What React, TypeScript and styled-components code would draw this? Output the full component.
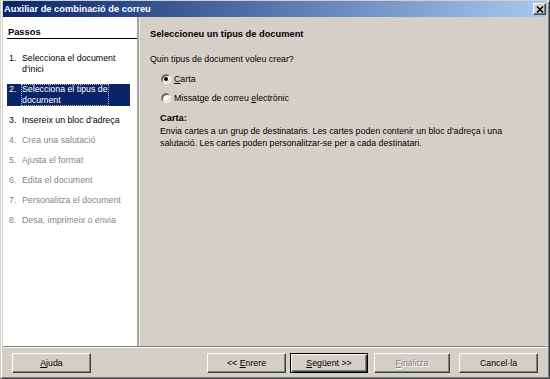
import React from "react";
import styled, { createGlobalStyle } from "styled-components";

const GlobalStyle = createGlobalStyle`
    html, body {
        margin: 0;
        padding: 0;
        background: #d4d0c8;
    }
    body {
        font-family: "Liberation Sans", Arial, sans-serif;
        font-size: 8.8px;
        color: #000;
    }
    * {
        box-sizing: border-box;
    }
`;

const Window = styled.div`
    width: 550px;
    height: 379px;
    display: flex;
    flex-direction: column;
    background: #d4d0c8;
    border: 1px solid;
    border-color: #d4d0c8 #404040 #404040 #d4d0c8;
    box-shadow: inset 1px 1px #fff, inset -1px -1px #808080;
    padding: 0 2px 2px 2px;
`;

const TitleBar = styled.div`
    flex: none;
    height: 16px;
    display: flex;
    align-items: center;
    justify-content: space-between;
    padding: 0 1px;
    background: linear-gradient(to right, #0a246a, #a6caf0);
`;

const Title = styled.span`
    color: #fff;
    font-weight: bold;
    font-size: 9.3px;
`;

const CloseButton = styled.button`
    width: 13px;
    height: 12px;
    padding: 0;
    display: flex;
    align-items: center;
    justify-content: center;
    background: #d4d0c8;
    border: 1px solid;
    border-color: #fff #404040 #404040 #fff;
    box-shadow: inset -1px -1px #808080;
`;

const Main = styled.div`
    flex: 1;
    display: flex;
    min-height: 0;
`;

const StepsPane = styled.nav`
    flex: none;
    width: 136px;
    background: #fff;
    border-right: 2px solid #a8a59e;
    padding: 10px 0 0 4px;
`;

const StepsHeader = styled.div`
    font-weight: bold;
    font-size: 9.3px;
    line-height: 11px;
    padding-left: 1px;
    border-bottom: 1px solid #000;
`;

const StepList = styled.ol`
    list-style: none;
    margin: 14px 7px 0 0;
    padding: 0;
    display: flex;
    flex-direction: column;
    gap: 9px;
`;

const Step = styled.li<{ $active?: boolean; $disabled?: boolean }>`
    display: flex;
    line-height: 11px;
    padding-left: 2px;
    background: ${(p) => (p.$active ? "#0a246a" : "transparent")};
    color: ${(p) => (p.$active ? "#fff" : p.$disabled ? "#858585" : "#000")};
`;

const StepNumber = styled.span`
    flex: none;
    width: 12px;
`;

const StepLabel = styled.span<{ $focused?: boolean }>`
    white-space: nowrap;
    padding: 0 1px;
    outline: ${(p) => (p.$focused ? "1px dotted #b8bccc" : "none")};
    outline-offset: -1px;
`;

const ContentPane = styled.section`
    flex: 1;
    border-left: 1px solid #ecebe6;
    padding: 11px 10px 0 10px;
`;

const Heading = styled.h2`
    margin: 0;
    font-size: 9.3px;
    font-weight: bold;
    line-height: 12px;
`;

const Question = styled.p`
    margin: 13px 0 0;
    line-height: 12px;
`;

const Options = styled.div`
    margin: 7px 0 0 11px;
    display: flex;
    flex-direction: column;
    gap: 5px;
`;

const Option = styled.label`
    display: flex;
    align-items: center;
    gap: 3px;
    height: 14px;
`;

const Radio = styled.span<{ $checked?: boolean }>`
    position: relative;
    flex: none;
    width: 10px;
    height: 10px;
    border-radius: 50%;
    background: #fff;
    border: 1px solid;
    border-color: #808080 #fff #fff #808080;
    box-shadow: inset 1px 1px #404040, inset -1px -1px #d4d0c8;

    &::after {
        content: "";
        position: absolute;
        left: 2px;
        top: 2px;
        width: 4px;
        height: 4px;
        border-radius: 50%;
        background: #000;
        display: ${(p) => (p.$checked ? "block" : "none")};
    }
`;

const Description = styled.div`
    margin: 7px 0 0 10px;
    line-height: 12px;
`;

const DescTitle = styled.div`
    font-weight: bold;
    font-size: 9.3px;
`;

const DescText = styled.p`
    margin: 1px 0 0;
`;

const Separator = styled.hr`
    flex: none;
    margin: 0;
    height: 2px;
    border: 0;
    border-top: 1px solid #808080;
    border-bottom: 1px solid #fff;
`;

const Footer = styled.div`
    flex: none;
    height: 28px;
    display: flex;
    align-items: flex-start;
    padding: 5px 9px 3px;
`;

const Spacer = styled.div`
    flex: 1;
`;

const Button = styled.button<{ $width: number; $default?: boolean; $gap?: number }>`
    width: ${(p) => p.$width}px;
    height: 20px;
    margin-left: ${(p) => p.$gap || 0}px;
    padding: 0;
    font: inherit;
    color: #000;
    background: #d4d0c8;
    border: 1px solid;
    border-color: ${(p) => (p.$default ? "#000" : "#fff #404040 #404040 #fff")};
    box-shadow: ${(p) =>
        p.$default
            ? "inset 1px 1px #fff, inset -1px -1px #404040, inset -2px -2px #808080"
            : "inset -1px -1px #808080"};

    &:disabled {
        color: #808080;
        text-shadow: 1px 1px #fff;
    }
`;

const steps = [
    { lines: ["Selecciona el document", "d'inici"] },
    { lines: ["Selecciona el tipus de", "document"], active: true },
    { lines: ["Insereix un bloc d'adreça"] },
    { lines: ["Crea una salutació"], disabled: true },
    { lines: ["Ajusta el format"], disabled: true },
    { lines: ["Edita el document"], disabled: true },
    { lines: ["Personalitza el document"], disabled: true },
    { lines: ["Desa, imprimeix o envia"], disabled: true },
];

export default function App() {
    return (
        <>
            <GlobalStyle />
            <Window>
                <TitleBar>
                    <Title>Auxiliar de combinació de correu</Title>
                    <CloseButton type="button" aria-label="Tanca">
                        <svg width="8" height="7" viewBox="0 0 8 7">
                            <path
                                d="M1 0.5 L7 6.5 M7 0.5 L1 6.5"
                                stroke="#000"
                                strokeWidth="1.6"
                            />
                        </svg>
                    </CloseButton>
                </TitleBar>
                <Main>
                    <StepsPane>
                        <StepsHeader>Passos</StepsHeader>
                        <StepList>
                            {steps.map((step, idx) => (
                                <Step
                                    key={idx}
                                    $active={step.active}
                                    $disabled={step.disabled}>
                                    <StepNumber>{idx + 1}.</StepNumber>
                                    <StepLabel $focused={step.active}>
                                        {step.lines.map((line, i) => (
                                            <React.Fragment key={i}>
                                                {i > 0 && <br />}
                                                {line}
                                            </React.Fragment>
                                        ))}
                                    </StepLabel>
                                </Step>
                            ))}
                        </StepList>
                    </StepsPane>
                    <ContentPane>
                        <Heading>Seleccioneu un tipus de document</Heading>
                        <Question>Quin tipus de document voleu crear?</Question>
                        <Options>
                            <Option>
                                <Radio $checked />
                                <span>
                                    <u>C</u>arta
                                </span>
                            </Option>
                            <Option>
                                <Radio />
                                <span>
                                    Missatge de correu <u>e</u>lectrònic
                                </span>
                            </Option>
                        </Options>
                        <Description>
                            <DescTitle>Carta:</DescTitle>
                            <DescText>
                                Envia cartes a un grup de destinataris. Les cartes poden
                                contenir un bloc d'adreça i una
                                <br />
                                salutació. Les cartes poden personalitzar-se per a cada
                                destinatari.
                            </DescText>
                        </Description>
                    </ContentPane>
                </Main>
                <Separator />
                <Footer>
                    <Button type="button" $width={79}>
                        <u>A</u>juda
                    </Button>
                    <Spacer />
                    <Button type="button" $width={79}>
                        &lt;&lt; <u>E</u>nrere
                    </Button>
                    <Button type="button" $width={78} $gap={4} $default>
                        <u>S</u>egüent &gt;&gt;
                    </Button>
                    <Button type="button" $width={76} $gap={6} disabled>
                        <u>F</u>inalitza
                    </Button>
                    <Button type="button" $width={79} $gap={9}>
                        Cancel·la
                    </Button>
                </Footer>
            </Window>
        </>
    );
}
